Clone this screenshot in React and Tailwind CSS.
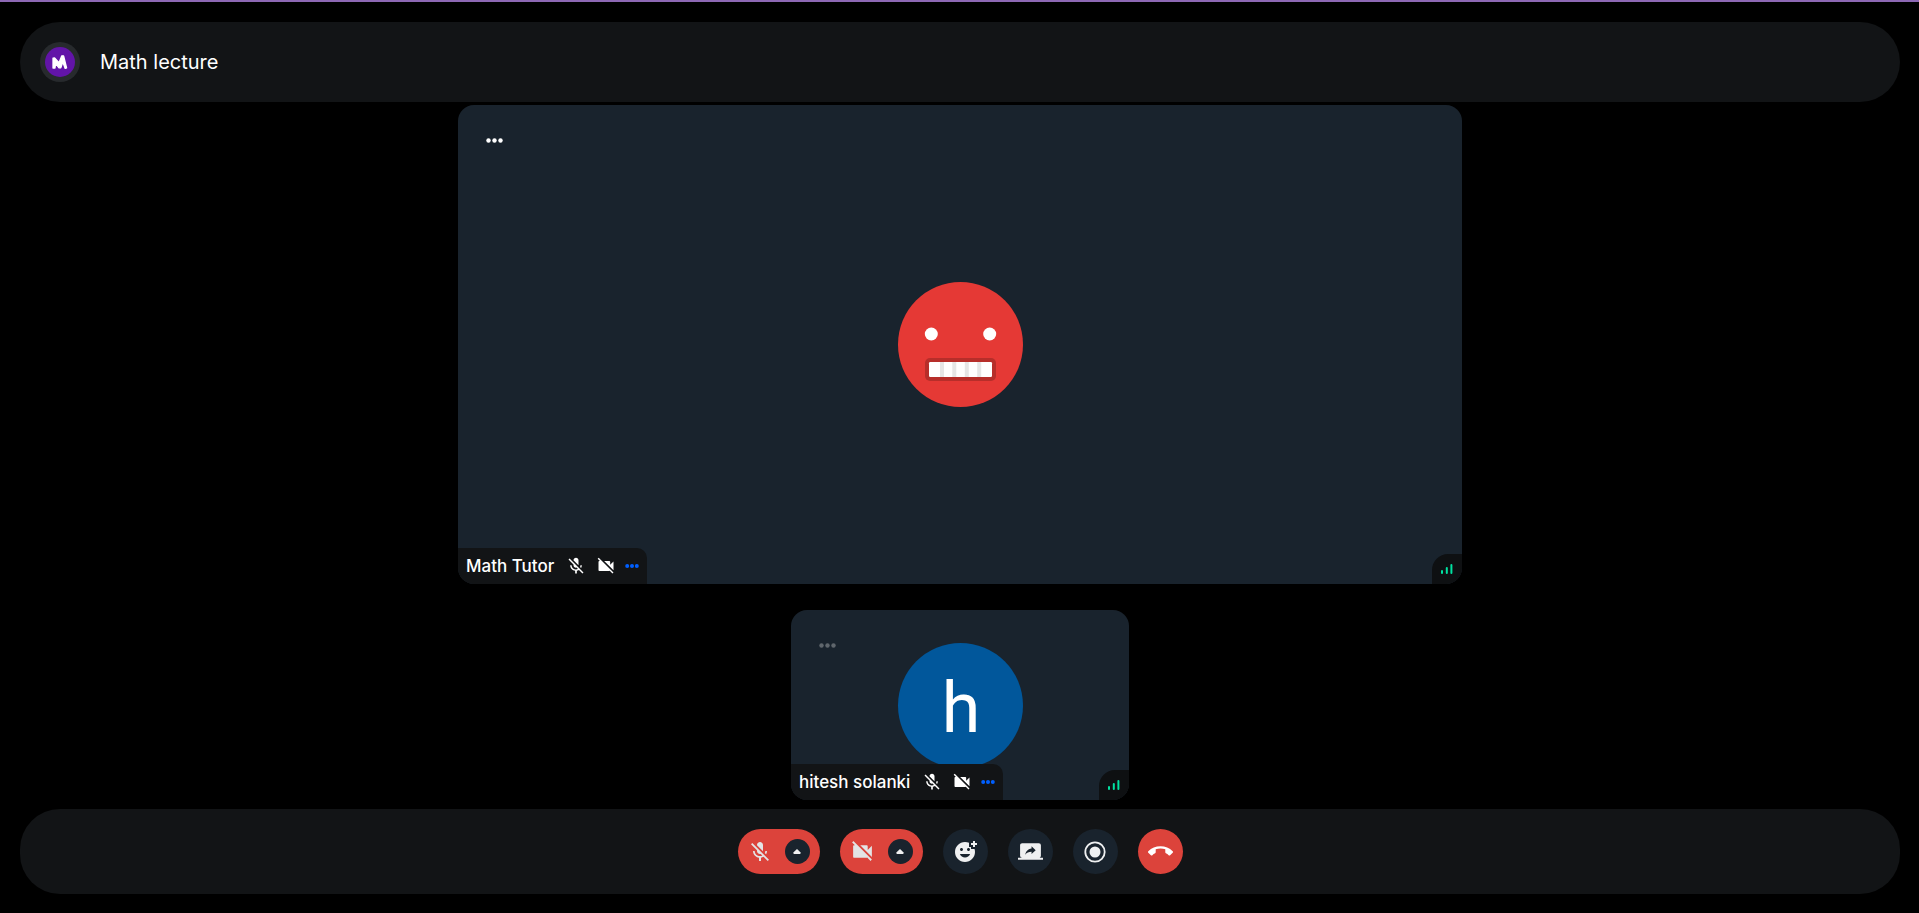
import { MdMicOff, MdVideocamOff, MdAddReaction, MdScreenShare, MdCallEnd } from "react-icons/md";

function Dots({ className, r = 2.2 }) {
  return (
    <svg viewBox="0 0 17 5" className={className} aria-hidden="true" fill="currentColor">
      <circle cx="2.5" cy="2.5" r={r} />
      <circle cx="8.5" cy="2.5" r={r} />
      <circle cx="14.5" cy="2.5" r={r} />
    </svg>
  );
}

function Logo() {
  return (
    <span className="flex size-10 items-center justify-center rounded-full bg-[#272a2d]">
      <svg viewBox="0 0 30 30" className="size-[30px]" aria-hidden="true">
        <circle cx="15" cy="15" r="15" fill="#6214a8" />
        <path
          d="M8 11.2L9.6 11L14 15.8L16.8 8.8L18.6 8.8L21.6 21L20.2 21.4L17.8 15L15.8 20.8L14 20.8L10.6 16.6L10 21L8 21Z"
          fill="#fff"
          stroke="#fff"
          strokeWidth="1.3"
          strokeLinejoin="round"
        />
      </svg>
    </span>
  );
}

function GrimaceAvatar() {
  return (
    <svg viewBox="0 0 125 125" className="size-[125px]" role="img" aria-label="Math Tutor">
      <circle cx="62.5" cy="62.5" r="62.5" fill="#e53935" />
      <circle cx="33.3" cy="52" r="6.5" fill="#fff" />
      <circle cx="91.7" cy="52" r="6.5" fill="#fff" />
      <rect x="27" y="76" width="71" height="23" rx="5" fill="#b72e2a" />
      <rect x="31" y="80" width="63" height="15" rx="1.2" fill="#fff" />
      <g fill="#e6e6e6">
        <rect x="42" y="80" width="4" height="15" />
        <rect x="54.3" y="80" width="4" height="15" />
        <rect x="66.8" y="80" width="4" height="15" />
        <rect x="79.2" y="80" width="4" height="15" />
      </g>
    </svg>
  );
}

function LetterAvatar({ letter }) {
  return (
    <div className="flex size-[125px] items-center justify-center rounded-full bg-[#01579b] pt-1.5 pl-0.5 font-['Roboto',sans-serif] text-[70px] leading-none font-[450] text-white">
      {letter}
    </div>
  );
}

function Tile({ name, dim, className, children }) {
  return (
    <section aria-label={name} className={`relative flex items-center justify-center overflow-hidden rounded-2xl bg-[#19232d] ${className}`}>
      {children}
      <button
        type="button"
        aria-label={`Options for ${name}`}
        className={`absolute top-[33px] left-7 flex text-white ${dim ? "opacity-30" : ""}`}
      >
        <Dots className="h-[5px] w-[17px]" />
      </button>
      <div className="absolute bottom-0 left-0 flex h-9 items-center rounded-tr-[10px] bg-[#121416] px-2 text-white">
        <span className="text-[17px] leading-6 font-medium">{name}</span>
        <MdMicOff className="ml-3 size-5" aria-hidden="true" />
        <MdVideocamOff className="ml-[10px] size-5" aria-hidden="true" />
        <Dots className="ml-[9px] h-1 w-[14px] text-[#005fff]" r={2.5} />
      </div>
      <div className="absolute right-0 bottom-0 flex size-[30px] items-center justify-center rounded-tl-2xl bg-[#0e1012]">
        <svg viewBox="0 0 12 10" className="h-[10px] w-3" fill="#00e2a1" aria-hidden="true">
          <rect x="0" y="6" width="2" height="4" rx="1" />
          <rect x="4.8" y="3" width="2" height="7" rx="1" />
          <rect x="9.4" y="0" width="2" height="10" rx="1" />
        </svg>
      </div>
    </section>
  );
}

function DeviceToggle({ label, menuLabel, icon }) {
  return (
    <div className="flex h-[45px] items-center rounded-full bg-[#dc433b] px-[10px]">
      <button type="button" aria-label={label} className="text-[#e3e4e5]">
        {icon}
      </button>
      <button type="button" aria-label={menuLabel} className="ml-[13px] flex size-[25px] items-center justify-center rounded-full bg-[#19232d]">
        <svg viewBox="0 0 8 5" className="h-[5px] w-2" fill="#eff0f1" aria-hidden="true">
          <path d="M4 0L7.4 3.2Q8 5 7 5H1Q0 5 .6 3.2Z" />
        </svg>
      </button>
    </div>
  );
}

function RoundButton({ label, color, children }) {
  return (
    <button type="button" aria-label={label} className={`flex size-[45px] items-center justify-center rounded-full ${color}`}>
      {children}
    </button>
  );
}

export default function App() {
  return (
    <div className="flex min-h-screen flex-col border-t-2 border-[#8d68b4] bg-black pt-5 pr-[19px] pb-[19px] pl-5 font-['Inter',sans-serif] text-white">
      <header className="flex h-20 items-center gap-5 rounded-full bg-[#121416] px-5">
        <Logo />
        <h1 className="text-xl leading-7">Math lecture</h1>
      </header>

      <main className="mt-[3px] mb-[9px] flex flex-1 flex-col items-center gap-[26px]">
        <Tile name="Math Tutor" className="w-full max-w-[1004px] flex-1">
          <GrimaceAvatar />
        </Tile>
        <Tile name="hitesh solanki" dim className="h-[190px] w-[338px]">
          <LetterAvatar letter="h" />
        </Tile>
      </main>

      <footer className="flex h-[85px] items-center justify-center gap-5 rounded-[40px] bg-[#121416]">
        <DeviceToggle label="Unmute microphone" menuLabel="Microphone options" icon={<MdMicOff className="size-6" />} />
        <DeviceToggle label="Turn on camera" menuLabel="Camera options" icon={<MdVideocamOff className="size-[25px]" />} />
        <RoundButton label="Reactions" color="bg-[#19232d] text-[#eff0f1]">
          <MdAddReaction className="size-6" />
        </RoundButton>
        <RoundButton label="Share screen" color="bg-[#19232d] text-[#eff0f1]">
          <MdScreenShare className="size-[25px]" />
        </RoundButton>
        <RoundButton label="Record call" color="bg-[#19232d] text-[#eff0f1]">
          <svg viewBox="0 0 22 22" className="size-[22px]" aria-hidden="true">
            <circle cx="11" cy="11" r="9.7" fill="none" stroke="currentColor" strokeWidth="1.8" />
            <circle cx="11" cy="11" r="5.5" fill="currentColor" />
          </svg>
        </RoundButton>
        <RoundButton label="Leave call" color="bg-[#dc433b] text-white">
          <MdCallEnd className="size-[25px]" />
        </RoundButton>
      </footer>
    </div>
  );
}
